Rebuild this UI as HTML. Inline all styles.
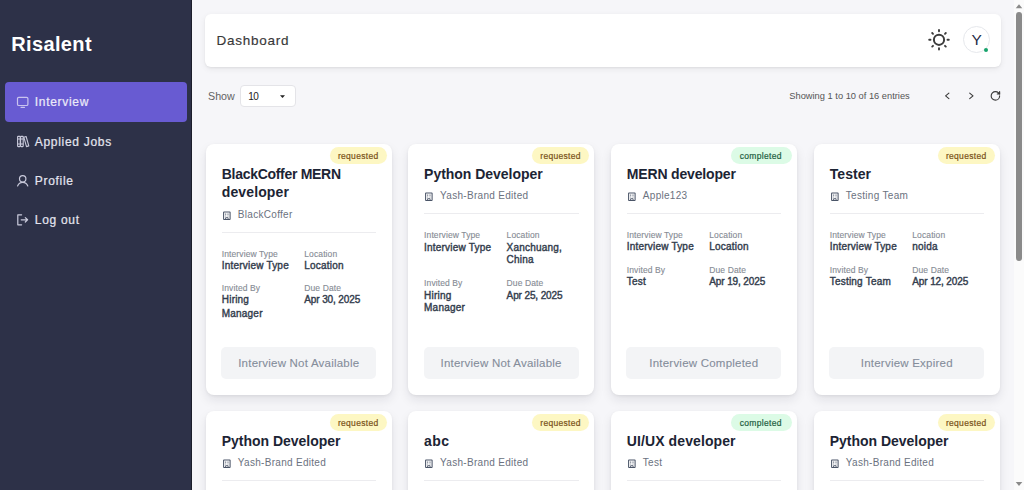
<!DOCTYPE html>
<html><head><meta charset="utf-8"><title>Risalent Dashboard</title>
<style>
html,body{margin:0;padding:0;width:1024px;height:490px;overflow:hidden;background:#f6f6f9;}
body{position:relative;font-family:"Liberation Sans", sans-serif;-webkit-font-smoothing:antialiased;}
</style></head><body>
<div id="sb" style="position:absolute;left:0;top:0;width:191px;height:490px;background:#2d3148;border-right:1px solid #1c1e2b;"></div>
<div style="position:absolute;left:11.3px;top:34px;font-size:20px;line-height:20px;color:#ffffff;font-weight:700;letter-spacing:0.35px;white-space:nowrap;">Risalent</div>
<div style="position:absolute;left:5px;top:82px;width:182px;height:40px;background:#685bd2;border-radius:4px;"></div>
<svg style="position:absolute;left:15px;top:94px" width="15" height="15" viewBox="0 0 15 15" fill="none" stroke-linecap="round" stroke-linejoin="round" stroke="#c9c3ef" stroke-width="1.2"><rect x="2.5" y="3.3" width="10.4" height="8.2" rx="1.3"/><path d="M6 13.3h3.5"/></svg>
<div style="position:absolute;left:34.8px;top:96px;font-size:12px;line-height:12px;color:#ebe9f8;font-weight:400;letter-spacing:0.7px;white-space:nowrap;-webkit-text-stroke:0.22px #ebe9f8;">Interview</div>
<svg style="position:absolute;left:15px;top:134px" width="15" height="15" viewBox="0 0 15 15" fill="none" stroke-linecap="round" stroke-linejoin="round" stroke="#c9cadb" stroke-width="1.1"><rect x="2.6" y="2.4" width="2.6" height="10.2" rx="0.5"/><rect x="5.6" y="2.4" width="2.6" height="10.2" rx="0.5"/><path d="M8.8 3.2l2.3-.7 2.7 9.4-2.3.7z"/><path d="M3 5h2M6 5h2M3 10h2M6 10h2"/></svg>
<div style="position:absolute;left:34.8px;top:136px;font-size:12px;line-height:12px;color:#e3e4ee;font-weight:400;letter-spacing:0.7px;white-space:nowrap;-webkit-text-stroke:0.22px #e3e4ee;">Applied Jobs</div>
<svg style="position:absolute;left:15px;top:173px" width="15" height="15" viewBox="0 0 15 15" fill="none" stroke-linecap="round" stroke-linejoin="round" stroke="#c9cadb" stroke-width="1.2"><circle cx="7.7" cy="5.8" r="3.2"/><path d="M2.6 12.9c.9-2.2 2.8-3.6 5.1-3.6s4.2 1.4 5.1 3.6"/></svg>
<div style="position:absolute;left:34.8px;top:175px;font-size:12px;line-height:12px;color:#e3e4ee;font-weight:400;letter-spacing:0.7px;white-space:nowrap;-webkit-text-stroke:0.22px #e3e4ee;">Profile</div>
<svg style="position:absolute;left:15px;top:212px" width="15" height="15" viewBox="0 0 15 15" fill="none" stroke-linecap="round" stroke-linejoin="round" stroke="#c9cadb" stroke-width="1.2"><path d="M6.6 2.8H2.8v10h3.8"/><path d="M6.2 7.8h6.4M10.3 5.6l2.3 2.2-2.3 2.2"/></svg>
<div style="position:absolute;left:34.8px;top:214px;font-size:12px;line-height:12px;color:#e3e4ee;font-weight:400;letter-spacing:0.7px;white-space:nowrap;-webkit-text-stroke:0.22px #e3e4ee;">Log out</div>
<div style="position:absolute;left:192px;top:0;width:822px;height:490px;background:#f6f6f9;"></div>
<div style="position:absolute;left:1014px;top:0;width:10px;height:490px;background:#fbfbfb;"></div>
<div style="position:absolute;left:1016px;top:12px;width:6px;height:249px;background:#8a8a8a;border-radius:3px;"></div>
<svg style="position:absolute;left:1014px;top:0" width="10" height="490"><path d="M1.7 8.2L5 4.3 8.3 8.2z" fill="#8a8a8a"/><path d="M1.7 482L5 486 8.3 482z" fill="#8a8a8a"/></svg>
<div style="position:absolute;left:205px;top:14px;width:795.5px;height:52.7px;background:#fff;border-radius:6px;box-shadow:0 1px 2px rgba(0,0,0,0.05),0 2px 6px rgba(0,0,0,0.07);"></div>
<div style="position:absolute;left:216.5px;top:34px;font-size:13.5px;line-height:13.5px;color:#383838;font-weight:400;letter-spacing:0.75px;white-space:nowrap;-webkit-text-stroke:0.15px #383838;">Dashboard</div>
<svg style="position:absolute;left:927px;top:28px" width="24" height="24" viewBox="0 0 24 24" fill="none" stroke="#3c3c3c" stroke-linecap="round"><circle cx="12" cy="11.8" r="5.1" stroke-width="2"/><g stroke-width="1.9"><path d="M12 2v1.3M12 20.3v1.3M2.2 11.8h1.3M20.5 11.8h1.3M5.2 5l.8.8M18 17.8l.8.8M5.2 18.6l.8-.8M18 5.8l.8-.8"/></g></svg>
<div style="position:absolute;left:962.8px;top:26.3px;width:27px;height:27px;border-radius:50%;border:1px solid #e6e8ec;box-sizing:border-box;background:#fff;"></div>
<div style="position:absolute;left:971.4px;top:32px;font-size:15.5px;line-height:15.5px;color:#1f2a44;font-weight:400;letter-spacing:0px;white-space:nowrap;">Y</div>
<div style="position:absolute;left:983.8px;top:47.8px;width:4.6px;height:4.6px;border-radius:50%;background:#17a36c;"></div>
<div style="position:absolute;left:208px;top:91px;font-size:10.7px;line-height:10.7px;color:#636363;font-weight:400;letter-spacing:0px;white-space:nowrap;">Show</div>
<div style="position:absolute;left:240px;top:85px;width:55.5px;height:21.5px;border-radius:4px;border:1px solid #e4e4e8;box-sizing:border-box;background:#fff;"></div>
<div style="position:absolute;left:248.2px;top:92px;font-size:10px;line-height:10px;color:#222;font-weight:400;letter-spacing:-0.6px;white-space:nowrap;">10</div>
<svg style="position:absolute;left:278.6px;top:94px" width="7" height="5"><path d="M1 1.2h5L3.5 4z" fill="#222"/></svg>
<div style="position:absolute;left:789.3px;top:92px;font-size:9.3px;line-height:9.3px;color:#555;font-weight:400;letter-spacing:0px;white-space:nowrap;">Showing 1 to 10 of 16 entries</div>
<svg style="position:absolute;left:940px;top:88px" width="64" height="16" viewBox="0 0 64 16" fill="none" stroke="#3a3a3a" stroke-width="1.1" stroke-linecap="round" stroke-linejoin="round"><path d="M8.9 5.1L5.6 7.9 8.9 10.7"/><path d="M29.7 5.1L33 7.9l-3.3 2.8"/><g transform="translate(55.4 7.9) scale(0.47) translate(-12 -12)" stroke-width="2.4"><path d="M21 12a9 9 0 1 1-9-9c2.52 0 4.93 1 6.74 2.74L21 8"/><path d="M21 3v5h-5" fill="#3a3a3a"/></g></svg>
<div style="position:absolute;left:206px;top:144px;width:186px;height:250.7px;background:#fff;border-radius:8px;box-shadow:0 1px 3px rgba(0,0,0,0.06),0 5px 11px rgba(20,20,40,0.09);"></div><div style="position:absolute;left:329.50px;top:147px;width:57.5px;height:17px;border-radius:9px;background:#fdf7c3;"></div><div style="position:absolute;left:337.95px;top:152px;font-size:8.5px;line-height:8.5px;color:#7a5218;font-weight:400;letter-spacing:0.3px;white-space:nowrap;-webkit-text-stroke:0.2px #7a5218;">requested</div><div style="position:absolute;left:221.8px;top:167px;font-size:14px;line-height:14px;color:#1c2434;font-weight:700;letter-spacing:-0.3px;white-space:nowrap;">BlackCoffer MERN</div><div style="position:absolute;left:221.8px;top:185px;font-size:14px;line-height:14px;color:#1c2434;font-weight:700;letter-spacing:0.12px;white-space:nowrap;">developer</div><svg style="position:absolute;left:221.8px;top:209.5px" width="10" height="11" viewBox="0 0 10 11" fill="none" stroke="#4b5568"><rect x="1.6" y="1.9" width="6.5" height="7.6" rx="0.4" stroke-width="1.05"/><path d="M3.7 3.5v1.3M6 3.5v1.3M3.7 5.6v.8M6 5.6v.8" stroke-width="0.9"/><path d="M3.6 9.4V7.7h2.5v1.7" stroke-width="0.9"/></svg><div style="position:absolute;left:237.8px;top:210px;font-size:10px;line-height:10px;color:#6b7280;font-weight:400;letter-spacing:0.3px;white-space:nowrap;">BlackCoffer</div><div style="position:absolute;left:221.80px;top:231.70px;width:154.5px;height:1px;background:#ececef;"></div><div style="position:absolute;left:221.8px;top:250px;font-size:8.5px;line-height:8.5px;color:#868b94;font-weight:400;letter-spacing:0.1px;white-space:nowrap;-webkit-text-stroke:0.12px #868b94;">Interview Type</div><div style="position:absolute;left:304.3px;top:250px;font-size:8.5px;line-height:8.5px;color:#868b94;font-weight:400;letter-spacing:0.1px;white-space:nowrap;-webkit-text-stroke:0.12px #868b94;">Location</div><div style="position:absolute;left:221.8px;top:261px;font-size:10px;line-height:10px;color:#333d4d;font-weight:400;letter-spacing:0.2px;white-space:nowrap;-webkit-text-stroke:0.4px #333d4d;">Interview Type</div><div style="position:absolute;left:304.3px;top:261px;font-size:10px;line-height:10px;color:#333d4d;font-weight:400;letter-spacing:0.2px;white-space:nowrap;-webkit-text-stroke:0.4px #333d4d;">Location</div><div style="position:absolute;left:221.8px;top:284px;font-size:8.5px;line-height:8.5px;color:#868b94;font-weight:400;letter-spacing:0.1px;white-space:nowrap;-webkit-text-stroke:0.12px #868b94;">Invited By</div><div style="position:absolute;left:304.3px;top:284px;font-size:8.5px;line-height:8.5px;color:#868b94;font-weight:400;letter-spacing:0.1px;white-space:nowrap;-webkit-text-stroke:0.12px #868b94;">Due Date</div><div style="position:absolute;left:221.8px;top:295px;font-size:10px;line-height:10px;color:#333d4d;font-weight:400;letter-spacing:0.2px;white-space:nowrap;-webkit-text-stroke:0.4px #333d4d;">Hiring</div><div style="position:absolute;left:221.8px;top:309px;font-size:10px;line-height:10px;color:#333d4d;font-weight:400;letter-spacing:0.2px;white-space:nowrap;-webkit-text-stroke:0.4px #333d4d;">Manager</div><div style="position:absolute;left:304.3px;top:295px;font-size:10px;line-height:10px;color:#333d4d;font-weight:400;letter-spacing:-0.12px;white-space:nowrap;-webkit-text-stroke:0.4px #333d4d;">Apr 30, 2025</div><div style="position:absolute;left:221.30px;top:347.20px;width:155px;height:31.6px;border-radius:5px;background:#f3f4f6;"></div><div style="position:absolute;left:221.30px;top:358px;width:155px;text-align:center;font-size:11.5px;line-height:11.5px;color:#858d9b;letter-spacing:0.22px;-webkit-text-stroke:0.1px #858d9b;white-space:nowrap;">Interview Not Available</div>
<div style="position:absolute;left:408.3px;top:144px;width:186px;height:250.7px;background:#fff;border-radius:8px;box-shadow:0 1px 3px rgba(0,0,0,0.06),0 5px 11px rgba(20,20,40,0.09);"></div><div style="position:absolute;left:531.80px;top:147px;width:57.5px;height:17px;border-radius:9px;background:#fdf7c3;"></div><div style="position:absolute;left:540.25px;top:152px;font-size:8.5px;line-height:8.5px;color:#7a5218;font-weight:400;letter-spacing:0.3px;white-space:nowrap;-webkit-text-stroke:0.2px #7a5218;">requested</div><div style="position:absolute;left:424.1px;top:167px;font-size:14px;line-height:14px;color:#1c2434;font-weight:700;letter-spacing:-0.03px;white-space:nowrap;">Python Developer</div><svg style="position:absolute;left:424.1px;top:190.5px" width="10" height="11" viewBox="0 0 10 11" fill="none" stroke="#4b5568"><rect x="1.6" y="1.9" width="6.5" height="7.6" rx="0.4" stroke-width="1.05"/><path d="M3.7 3.5v1.3M6 3.5v1.3M3.7 5.6v.8M6 5.6v.8" stroke-width="0.9"/><path d="M3.6 9.4V7.7h2.5v1.7" stroke-width="0.9"/></svg><div style="position:absolute;left:440.1px;top:191px;font-size:10px;line-height:10px;color:#6b7280;font-weight:400;letter-spacing:0.3px;white-space:nowrap;">Yash-Brand Edited</div><div style="position:absolute;left:424.10px;top:213.10px;width:154.5px;height:1px;background:#ececef;"></div><div style="position:absolute;left:424.1px;top:231px;font-size:8.5px;line-height:8.5px;color:#868b94;font-weight:400;letter-spacing:0.1px;white-space:nowrap;-webkit-text-stroke:0.12px #868b94;">Interview Type</div><div style="position:absolute;left:506.6px;top:231px;font-size:8.5px;line-height:8.5px;color:#868b94;font-weight:400;letter-spacing:0.1px;white-space:nowrap;-webkit-text-stroke:0.12px #868b94;">Location</div><div style="position:absolute;left:424.1px;top:243px;font-size:10px;line-height:10px;color:#333d4d;font-weight:400;letter-spacing:0.2px;white-space:nowrap;-webkit-text-stroke:0.4px #333d4d;">Interview Type</div><div style="position:absolute;left:506.6px;top:243px;font-size:10px;line-height:10px;color:#333d4d;font-weight:400;letter-spacing:0.2px;white-space:nowrap;-webkit-text-stroke:0.4px #333d4d;">Xanchuang,</div><div style="position:absolute;left:506.6px;top:255px;font-size:10px;line-height:10px;color:#333d4d;font-weight:400;letter-spacing:0.2px;white-space:nowrap;-webkit-text-stroke:0.4px #333d4d;">China</div><div style="position:absolute;left:424.1px;top:279px;font-size:8.5px;line-height:8.5px;color:#868b94;font-weight:400;letter-spacing:0.1px;white-space:nowrap;-webkit-text-stroke:0.12px #868b94;">Invited By</div><div style="position:absolute;left:506.6px;top:279px;font-size:8.5px;line-height:8.5px;color:#868b94;font-weight:400;letter-spacing:0.1px;white-space:nowrap;-webkit-text-stroke:0.12px #868b94;">Due Date</div><div style="position:absolute;left:424.1px;top:291px;font-size:10px;line-height:10px;color:#333d4d;font-weight:400;letter-spacing:0.2px;white-space:nowrap;-webkit-text-stroke:0.4px #333d4d;">Hiring</div><div style="position:absolute;left:424.1px;top:303px;font-size:10px;line-height:10px;color:#333d4d;font-weight:400;letter-spacing:0.2px;white-space:nowrap;-webkit-text-stroke:0.4px #333d4d;">Manager</div><div style="position:absolute;left:506.6px;top:291px;font-size:10px;line-height:10px;color:#333d4d;font-weight:400;letter-spacing:-0.12px;white-space:nowrap;-webkit-text-stroke:0.4px #333d4d;">Apr 25, 2025</div><div style="position:absolute;left:423.60px;top:347.20px;width:155px;height:31.6px;border-radius:5px;background:#f3f4f6;"></div><div style="position:absolute;left:423.60px;top:358px;width:155px;text-align:center;font-size:11.5px;line-height:11.5px;color:#858d9b;letter-spacing:0.22px;-webkit-text-stroke:0.1px #858d9b;white-space:nowrap;">Interview Not Available</div>
<div style="position:absolute;left:611px;top:144px;width:186px;height:250.7px;background:#fff;border-radius:8px;box-shadow:0 1px 3px rgba(0,0,0,0.06),0 5px 11px rgba(20,20,40,0.09);"></div><div style="position:absolute;left:730.80px;top:147px;width:61.2px;height:17px;border-radius:9px;background:#dcfbe6;"></div><div style="position:absolute;left:739.8px;top:152px;font-size:8.5px;line-height:8.5px;color:#1d5e3f;font-weight:400;letter-spacing:0.3px;white-space:nowrap;-webkit-text-stroke:0.2px #1d5e3f;">completed</div><div style="position:absolute;left:626.8px;top:167px;font-size:14px;line-height:14px;color:#1c2434;font-weight:700;letter-spacing:-0.17px;white-space:nowrap;">MERN developer</div><svg style="position:absolute;left:626.8px;top:190.5px" width="10" height="11" viewBox="0 0 10 11" fill="none" stroke="#4b5568"><rect x="1.6" y="1.9" width="6.5" height="7.6" rx="0.4" stroke-width="1.05"/><path d="M3.7 3.5v1.3M6 3.5v1.3M3.7 5.6v.8M6 5.6v.8" stroke-width="0.9"/><path d="M3.6 9.4V7.7h2.5v1.7" stroke-width="0.9"/></svg><div style="position:absolute;left:642.8px;top:191px;font-size:10px;line-height:10px;color:#6b7280;font-weight:400;letter-spacing:0.3px;white-space:nowrap;">Apple123</div><div style="position:absolute;left:626.80px;top:213.10px;width:154.5px;height:1px;background:#ececef;"></div><div style="position:absolute;left:626.8px;top:231px;font-size:8.5px;line-height:8.5px;color:#868b94;font-weight:400;letter-spacing:0.1px;white-space:nowrap;-webkit-text-stroke:0.12px #868b94;">Interview Type</div><div style="position:absolute;left:709.3px;top:231px;font-size:8.5px;line-height:8.5px;color:#868b94;font-weight:400;letter-spacing:0.1px;white-space:nowrap;-webkit-text-stroke:0.12px #868b94;">Location</div><div style="position:absolute;left:626.8px;top:242px;font-size:10px;line-height:10px;color:#333d4d;font-weight:400;letter-spacing:0.2px;white-space:nowrap;-webkit-text-stroke:0.4px #333d4d;">Interview Type</div><div style="position:absolute;left:709.3px;top:242px;font-size:10px;line-height:10px;color:#333d4d;font-weight:400;letter-spacing:0.2px;white-space:nowrap;-webkit-text-stroke:0.4px #333d4d;">Location</div><div style="position:absolute;left:626.8px;top:266px;font-size:8.5px;line-height:8.5px;color:#868b94;font-weight:400;letter-spacing:0.1px;white-space:nowrap;-webkit-text-stroke:0.12px #868b94;">Invited By</div><div style="position:absolute;left:709.3px;top:266px;font-size:8.5px;line-height:8.5px;color:#868b94;font-weight:400;letter-spacing:0.1px;white-space:nowrap;-webkit-text-stroke:0.12px #868b94;">Due Date</div><div style="position:absolute;left:626.8px;top:277px;font-size:10px;line-height:10px;color:#333d4d;font-weight:400;letter-spacing:0.2px;white-space:nowrap;-webkit-text-stroke:0.4px #333d4d;">Test</div><div style="position:absolute;left:709.3px;top:277px;font-size:10px;line-height:10px;color:#333d4d;font-weight:400;letter-spacing:-0.12px;white-space:nowrap;-webkit-text-stroke:0.4px #333d4d;">Apr 19, 2025</div><div style="position:absolute;left:626.30px;top:347.20px;width:155px;height:31.6px;border-radius:5px;background:#f3f4f6;"></div><div style="position:absolute;left:626.30px;top:358px;width:155px;text-align:center;font-size:11.5px;line-height:11.5px;color:#858d9b;letter-spacing:0.22px;-webkit-text-stroke:0.1px #858d9b;white-space:nowrap;">Interview Completed</div>
<div style="position:absolute;left:814px;top:144px;width:186px;height:250.7px;background:#fff;border-radius:8px;box-shadow:0 1px 3px rgba(0,0,0,0.06),0 5px 11px rgba(20,20,40,0.09);"></div><div style="position:absolute;left:937.50px;top:147px;width:57.5px;height:17px;border-radius:9px;background:#fdf7c3;"></div><div style="position:absolute;left:945.95px;top:152px;font-size:8.5px;line-height:8.5px;color:#7a5218;font-weight:400;letter-spacing:0.3px;white-space:nowrap;-webkit-text-stroke:0.2px #7a5218;">requested</div><div style="position:absolute;left:829.8px;top:167px;font-size:14px;line-height:14px;color:#1c2434;font-weight:700;letter-spacing:0.05px;white-space:nowrap;">Tester</div><svg style="position:absolute;left:829.8px;top:190.5px" width="10" height="11" viewBox="0 0 10 11" fill="none" stroke="#4b5568"><rect x="1.6" y="1.9" width="6.5" height="7.6" rx="0.4" stroke-width="1.05"/><path d="M3.7 3.5v1.3M6 3.5v1.3M3.7 5.6v.8M6 5.6v.8" stroke-width="0.9"/><path d="M3.6 9.4V7.7h2.5v1.7" stroke-width="0.9"/></svg><div style="position:absolute;left:845.8px;top:191px;font-size:10px;line-height:10px;color:#6b7280;font-weight:400;letter-spacing:0.3px;white-space:nowrap;">Testing Team</div><div style="position:absolute;left:829.80px;top:213.10px;width:154.5px;height:1px;background:#ececef;"></div><div style="position:absolute;left:829.8px;top:231px;font-size:8.5px;line-height:8.5px;color:#868b94;font-weight:400;letter-spacing:0.1px;white-space:nowrap;-webkit-text-stroke:0.12px #868b94;">Interview Type</div><div style="position:absolute;left:912.3px;top:231px;font-size:8.5px;line-height:8.5px;color:#868b94;font-weight:400;letter-spacing:0.1px;white-space:nowrap;-webkit-text-stroke:0.12px #868b94;">Location</div><div style="position:absolute;left:829.8px;top:242px;font-size:10px;line-height:10px;color:#333d4d;font-weight:400;letter-spacing:0.2px;white-space:nowrap;-webkit-text-stroke:0.4px #333d4d;">Interview Type</div><div style="position:absolute;left:912.3px;top:242px;font-size:10px;line-height:10px;color:#333d4d;font-weight:400;letter-spacing:0.2px;white-space:nowrap;-webkit-text-stroke:0.4px #333d4d;">noida</div><div style="position:absolute;left:829.8px;top:266px;font-size:8.5px;line-height:8.5px;color:#868b94;font-weight:400;letter-spacing:0.1px;white-space:nowrap;-webkit-text-stroke:0.12px #868b94;">Invited By</div><div style="position:absolute;left:912.3px;top:266px;font-size:8.5px;line-height:8.5px;color:#868b94;font-weight:400;letter-spacing:0.1px;white-space:nowrap;-webkit-text-stroke:0.12px #868b94;">Due Date</div><div style="position:absolute;left:829.8px;top:277px;font-size:10px;line-height:10px;color:#333d4d;font-weight:400;letter-spacing:0.2px;white-space:nowrap;-webkit-text-stroke:0.4px #333d4d;">Testing Team</div><div style="position:absolute;left:912.3px;top:277px;font-size:10px;line-height:10px;color:#333d4d;font-weight:400;letter-spacing:-0.12px;white-space:nowrap;-webkit-text-stroke:0.4px #333d4d;">Apr 12, 2025</div><div style="position:absolute;left:829.30px;top:347.20px;width:155px;height:31.6px;border-radius:5px;background:#f3f4f6;"></div><div style="position:absolute;left:829.30px;top:358px;width:155px;text-align:center;font-size:11.5px;line-height:11.5px;color:#858d9b;letter-spacing:0.22px;-webkit-text-stroke:0.1px #858d9b;white-space:nowrap;">Interview Expired</div>
<div style="position:absolute;left:206px;top:411px;width:186px;height:250px;background:#fff;border-radius:8px;box-shadow:0 1px 3px rgba(0,0,0,0.06),0 5px 11px rgba(20,20,40,0.09);"></div><div style="position:absolute;left:329.50px;top:414px;width:57.5px;height:17px;border-radius:9px;background:#fdf7c3;"></div><div style="position:absolute;left:337.95px;top:419px;font-size:8.5px;line-height:8.5px;color:#7a5218;font-weight:400;letter-spacing:0.3px;white-space:nowrap;-webkit-text-stroke:0.2px #7a5218;">requested</div><div style="position:absolute;left:221.8px;top:434px;font-size:14px;line-height:14px;color:#1c2434;font-weight:700;letter-spacing:-0.03px;white-space:nowrap;">Python Developer</div><svg style="position:absolute;left:221.8px;top:457.5px" width="10" height="11" viewBox="0 0 10 11" fill="none" stroke="#4b5568"><rect x="1.6" y="1.9" width="6.5" height="7.6" rx="0.4" stroke-width="1.05"/><path d="M3.7 3.5v1.3M6 3.5v1.3M3.7 5.6v.8M6 5.6v.8" stroke-width="0.9"/><path d="M3.6 9.4V7.7h2.5v1.7" stroke-width="0.9"/></svg><div style="position:absolute;left:237.8px;top:458px;font-size:10px;line-height:10px;color:#6b7280;font-weight:400;letter-spacing:0.3px;white-space:nowrap;">Yash-Brand Edited</div><div style="position:absolute;left:221.80px;top:479.80px;width:154.5px;height:1px;background:#ececef;"></div>
<div style="position:absolute;left:408.3px;top:411px;width:186px;height:250px;background:#fff;border-radius:8px;box-shadow:0 1px 3px rgba(0,0,0,0.06),0 5px 11px rgba(20,20,40,0.09);"></div><div style="position:absolute;left:531.80px;top:414px;width:57.5px;height:17px;border-radius:9px;background:#fdf7c3;"></div><div style="position:absolute;left:540.25px;top:419px;font-size:8.5px;line-height:8.5px;color:#7a5218;font-weight:400;letter-spacing:0.3px;white-space:nowrap;-webkit-text-stroke:0.2px #7a5218;">requested</div><div style="position:absolute;left:424.1px;top:434px;font-size:14px;line-height:14px;color:#1c2434;font-weight:700;letter-spacing:0.4px;white-space:nowrap;">abc</div><svg style="position:absolute;left:424.1px;top:457.5px" width="10" height="11" viewBox="0 0 10 11" fill="none" stroke="#4b5568"><rect x="1.6" y="1.9" width="6.5" height="7.6" rx="0.4" stroke-width="1.05"/><path d="M3.7 3.5v1.3M6 3.5v1.3M3.7 5.6v.8M6 5.6v.8" stroke-width="0.9"/><path d="M3.6 9.4V7.7h2.5v1.7" stroke-width="0.9"/></svg><div style="position:absolute;left:440.1px;top:458px;font-size:10px;line-height:10px;color:#6b7280;font-weight:400;letter-spacing:0.3px;white-space:nowrap;">Yash-Brand Edited</div><div style="position:absolute;left:424.10px;top:479.80px;width:154.5px;height:1px;background:#ececef;"></div>
<div style="position:absolute;left:611px;top:411px;width:186px;height:250px;background:#fff;border-radius:8px;box-shadow:0 1px 3px rgba(0,0,0,0.06),0 5px 11px rgba(20,20,40,0.09);"></div><div style="position:absolute;left:730.80px;top:414px;width:61.2px;height:17px;border-radius:9px;background:#dcfbe6;"></div><div style="position:absolute;left:739.8px;top:419px;font-size:8.5px;line-height:8.5px;color:#1d5e3f;font-weight:400;letter-spacing:0.3px;white-space:nowrap;-webkit-text-stroke:0.2px #1d5e3f;">completed</div><div style="position:absolute;left:626.8px;top:434px;font-size:14px;line-height:14px;color:#1c2434;font-weight:700;letter-spacing:0.1px;white-space:nowrap;">UI/UX developer</div><svg style="position:absolute;left:626.8px;top:457.5px" width="10" height="11" viewBox="0 0 10 11" fill="none" stroke="#4b5568"><rect x="1.6" y="1.9" width="6.5" height="7.6" rx="0.4" stroke-width="1.05"/><path d="M3.7 3.5v1.3M6 3.5v1.3M3.7 5.6v.8M6 5.6v.8" stroke-width="0.9"/><path d="M3.6 9.4V7.7h2.5v1.7" stroke-width="0.9"/></svg><div style="position:absolute;left:642.8px;top:458px;font-size:10px;line-height:10px;color:#6b7280;font-weight:400;letter-spacing:0.3px;white-space:nowrap;">Test</div><div style="position:absolute;left:626.80px;top:479.80px;width:154.5px;height:1px;background:#ececef;"></div>
<div style="position:absolute;left:814px;top:411px;width:186px;height:250px;background:#fff;border-radius:8px;box-shadow:0 1px 3px rgba(0,0,0,0.06),0 5px 11px rgba(20,20,40,0.09);"></div><div style="position:absolute;left:937.50px;top:414px;width:57.5px;height:17px;border-radius:9px;background:#fdf7c3;"></div><div style="position:absolute;left:945.95px;top:419px;font-size:8.5px;line-height:8.5px;color:#7a5218;font-weight:400;letter-spacing:0.3px;white-space:nowrap;-webkit-text-stroke:0.2px #7a5218;">requested</div><div style="position:absolute;left:829.8px;top:434px;font-size:14px;line-height:14px;color:#1c2434;font-weight:700;letter-spacing:-0.03px;white-space:nowrap;">Python Developer</div><svg style="position:absolute;left:829.8px;top:457.5px" width="10" height="11" viewBox="0 0 10 11" fill="none" stroke="#4b5568"><rect x="1.6" y="1.9" width="6.5" height="7.6" rx="0.4" stroke-width="1.05"/><path d="M3.7 3.5v1.3M6 3.5v1.3M3.7 5.6v.8M6 5.6v.8" stroke-width="0.9"/><path d="M3.6 9.4V7.7h2.5v1.7" stroke-width="0.9"/></svg><div style="position:absolute;left:845.8px;top:458px;font-size:10px;line-height:10px;color:#6b7280;font-weight:400;letter-spacing:0.3px;white-space:nowrap;">Yash-Brand Edited</div><div style="position:absolute;left:829.80px;top:479.80px;width:154.5px;height:1px;background:#ececef;"></div>
</body></html>
